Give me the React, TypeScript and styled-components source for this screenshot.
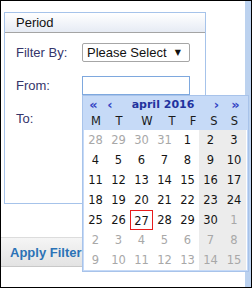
import styled, { createGlobalStyle } from 'styled-components'

const GlobalStyle = createGlobalStyle`
  html, body {
    margin: 0;
    padding: 0;
    background: #fff;
  }
  * {
    box-sizing: border-box;
  }
`

type Day = { n: number, other?: boolean, today?: boolean }

const weeks: Day[][] = [
  [{ n: 28, other: true }, { n: 29, other: true }, { n: 30, other: true }, { n: 31, other: true }, { n: 1 }, { n: 2 }, { n: 3 }],
  [{ n: 4 }, { n: 5 }, { n: 6 }, { n: 7 }, { n: 8 }, { n: 9 }, { n: 10 }],
  [{ n: 11 }, { n: 12 }, { n: 13 }, { n: 14 }, { n: 15 }, { n: 16 }, { n: 17 }],
  [{ n: 18 }, { n: 19 }, { n: 20 }, { n: 21 }, { n: 22 }, { n: 23 }, { n: 24 }],
  [{ n: 25 }, { n: 26 }, { n: 27, today: true }, { n: 28 }, { n: 29 }, { n: 30 }, { n: 1, other: true }],
  [{ n: 2, other: true }, { n: 3, other: true }, { n: 4, other: true }, { n: 5, other: true }, { n: 6, other: true }, { n: 7, other: true }, { n: 8, other: true }],
  [{ n: 9, other: true }, { n: 10, other: true }, { n: 11, other: true }, { n: 12, other: true }, { n: 13, other: true }, { n: 14, other: true }, { n: 15, other: true }],
]

const dayNames = ['M', 'T', 'W', 'T', 'F', 'S', 'S']

export default function App() {
  return (
    <>
      <GlobalStyle />
      <Frame>
        <Main>
          <Panel>
            <PanelHeader>Period</PanelHeader>
            <PanelBody>
              <Label>Filter By:</Label>
              <SelectBox>
                <span>Please Select</span>
                <Arrow>▼</Arrow>
              </SelectBox>
              <Label>From:</Label>
              <DateInput />
              <Label>To:</Label>
              <div />
            </PanelBody>
          </Panel>
          <ApplyBar>
            <ApplyButton>Apply Filter</ApplyButton>
          </ApplyBar>
        </Main>
        <Stripe />
        <Calendar>
          <NavRow>
            <NavLink>«</NavLink>
            <NavLink>‹</NavLink>
            <Title>april 2016</Title>
            <NavLink>›</NavLink>
            <NavLink>»</NavLink>
          </NavRow>
          <DayNames>
            {dayNames.map((d, i) => <DayName key={i}>{d}</DayName>)}
          </DayNames>
          <Body>
            {weeks.map((w, wi) => w.map((d, di) => (
              <Cell key={wi + '-' + di} $weekend={di >= 5} $other={!!d.other} $today={!!d.today}>{d.n}</Cell>
            )))}
          </Body>
        </Calendar>
      </Frame>
    </>
  )
}

const Frame = styled.div`
  position: relative;
  width: 252px;
  height: 288px;
  border: 1px solid #000;
  display: flex;
  background: #fff;
`

const Main = styled.div`
  flex: 1;
  display: flex;
  flex-direction: column;
`

const Stripe = styled.div`
  width: 6px;
  background: #bcd2ef;
`

const Panel = styled.div`
  margin: 11px 0 0 3px;
  width: 202px;
  height: 192px;
  border: 1px solid #a6c3ea;
`

const PanelHeader = styled.div`
  height: 20px;
  padding-left: 11px;
  line-height: 19px;
  font-family: "Liberation Sans", Arial, sans-serif;
  font-size: 13px;
  color: #111;
  background: linear-gradient(#ffffff, #e6ebf4);
  border-bottom: 1px solid #a4a4a4;
`

const PanelBody = styled.div`
  display: grid;
  grid-template-columns: 66px 108px;
  grid-auto-rows: 19px;
  row-gap: 14px;
  align-items: center;
  padding: 10px 0 0 11px;
`

const Label = styled.div`
  font-family: "Liberation Sans", Arial, sans-serif;
  font-size: 13px;
  color: #35356a;
`

const SelectBox = styled.div`
  height: 19px;
  border: 1px solid #a6a6a6;
  border-radius: 2px;
  display: flex;
  align-items: center;
  justify-content: space-between;
  padding: 0 8px 0 4px;
  font-family: "Liberation Sans", Arial, sans-serif;
  font-size: 13px;
  color: #111;
`

const Arrow = styled.span`
  font-family: "DejaVu Sans", sans-serif;
  font-size: 8px;
  color: #111;
`

const DateInput = styled.div`
  height: 19px;
  border: 1px solid #7ea8de;
  background: #fff;
`

const ApplyBar = styled.div`
  margin-top: 33px;
  height: 30px;
  display: flex;
  align-items: center;
  padding-left: 9px;
  background: linear-gradient(#f5f5f5, #e3e3e3);
  border-top: 1px solid #dcdcdc;
  border-bottom: 1px solid #c8c8c8;
`

const ApplyButton = styled.span`
  font-family: "Liberation Sans", Arial, sans-serif;
  font-weight: bold;
  font-size: 13px;
  color: #2b72b6;
`

const Calendar = styled.div`
  position: absolute;
  left: 81px;
  top: 94px;
  width: 167px;
  border: 1px solid #a8c3ea;
  background: #c6daf7;
  padding: 0 1px 1px 1px;
  font-family: "DejaVu Sans", Verdana, sans-serif;
`

const NavRow = styled.div`
  display: grid;
  grid-template-columns: 19px 14px 92px 15px 23px;
  height: 17px;
  align-items: center;
  text-align: center;
`

const NavLink = styled.span`
  font-size: 13px;
  line-height: 13px;
  font-weight: bold;
  color: #3444c4;
`

const Title = styled.span`
  font-size: 11px;
  font-weight: bold;
  color: #22329e;
`

const DayNames = styled.div`
  display: grid;
  grid-template-columns: 24px 22px 34px 16px 26px 16px 25px;
  height: 16px;
  align-items: center;
  text-align: center;
  font-size: 11.5px;
  color: #1a1a1a;
  margin-bottom: 1px;
`

const DayName = styled.span``

const Body = styled.div`
  display: grid;
  grid-template-columns: 23px 23px 23px 23px 23px 23px 24px;
  grid-auto-rows: 20px;
  background: #fff;
`

const Cell = styled.div<{ $weekend: boolean, $other: boolean, $today: boolean }>`
  display: flex;
  align-items: center;
  justify-content: center;
  font-size: 11.5px;
  color: ${p => p.$other ? '#a8a8a8' : '#151515'};
  background: ${p => p.$weekend ? '#ececec' : '#fff'};
  border: ${p => p.$today ? '1px solid #e81c1c' : '0 none'};
  padding-top: ${p => p.$today ? '2px' : '0'};
`
